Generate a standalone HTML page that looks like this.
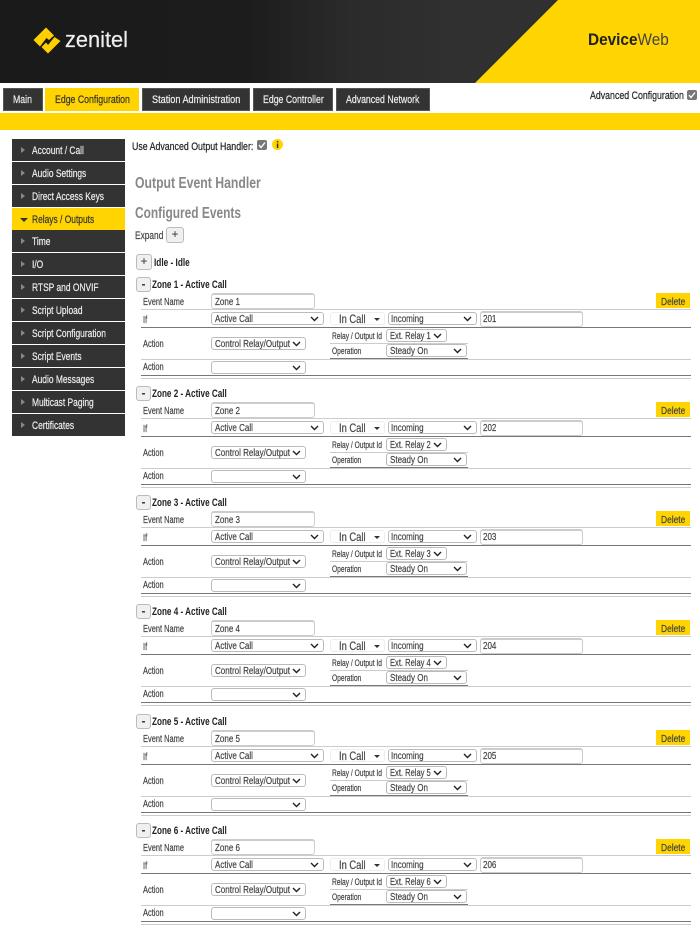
<!DOCTYPE html>
<html><head><meta charset="utf-8"><title>DeviceWeb</title>
<style>
html,body{margin:0;padding:0;background:#fff}
body{position:relative;width:700px;height:929px;overflow:hidden;font-family:"Liberation Sans",sans-serif;color:#333;filter:blur(.3px)}
.a{position:absolute}
.t{position:absolute;white-space:nowrap;transform:scaleX(.785);transform-origin:0 50%;font-size:11px;line-height:16px;height:16px;-webkit-text-stroke:.2px currentColor}
.tab{position:absolute;top:88px;height:23px;background:#333;border:1px solid #555;box-sizing:border-box}
.tab .t{color:#eee;top:3px;transform:scaleX(.795)}
.side{position:absolute;left:12px;width:113px;height:22px;background:#333}
.side .t{left:20px;top:4px;color:#eee;transform:scaleX(.765)}
.side i{position:absolute;left:9px;top:8px;width:0;height:0;border-left:4px solid #888;border-top:3px solid transparent;border-bottom:3px solid transparent}
.z{position:absolute;left:0;width:700px;height:105px}
.z>.t:nth-child(2){top:0!important;transform:scaleX(.74);-webkit-text-stroke:0}
.b{position:absolute;box-sizing:border-box;background:#f0f0f0;border:1px solid #bbb;border-radius:3px;width:15px;height:15px;text-align:center;font-size:12px;line-height:12px;color:#333}
.m{font-weight:bold}
.i{position:absolute;box-sizing:border-box;background:#fff;border:1px solid #ccc;border-top:2px solid #ccc;border-radius:3px}
.s{position:absolute;box-sizing:border-box;background:#fff;border:1px solid #bbb;border-radius:3px}
.s svg{position:absolute;right:4px;top:50%;margin-top:-3px}
.l{position:absolute;height:1px;background:#ccc}
.d{background:#777}
.lb{font-size:10px;color:#444;transform:scaleX(.745);margin-top:1px}
.dl{font-size:10.5px;color:#444;transform:scaleX(.8);margin-top:1px}
.sm{font-size:9px;color:#444;transform:scaleX(.74)}
.v{font-size:10.5px;color:#444;transform:scaleX(.765)}
.x{transform:scaleX(.72)}
.c{font-size:12px;color:#444;transform:scaleX(.78);left:339px;top:34px}
.k{position:absolute;left:374px;top:41px;border:3px solid transparent;border-top:3px solid #333;border-bottom:0}
.e{margin-top:1px}
.lb.e{margin-top:2px}
</style></head><body>

<div class="a" style="left:0;top:0;width:700px;height:83px;background:linear-gradient(90deg,#1a1a1a,#1c1c1c 35%,#2b2b2b 50%,#303030 65%)"></div>
<svg class="a" style="left:0;top:0" width="700" height="83"><polygon points="558,0 700,0 700,83 475,83" fill="#ffd400"/>
<path d="M33.5 40 46 27.5 54 35.5 49 40 46.5 38 40 46.5Z" fill="#ffd000"/>
<path d="M60.5 41 48 53.5 41.5 47 46 42.5 48 45 54.5 37Z" fill="#ffd000"/>
</svg>
<div class="t" style="left:65px;top:27px;font-size:22px;line-height:26px;height:26px;color:#eee;transform:scaleX(.99);-webkit-text-stroke:.2px #eee">zenitel</div>
<div class="t" style="left:588px;top:30px;font-size:16.5px;line-height:20px;height:20px;color:#222;transform:scaleX(.93);-webkit-text-stroke:0"><b>Device</b><span style="color:#444">Web</span></div>

<div class="tab" style="left:3px;width:40px"><span class="t" style="left:9px">Main</span></div>
<div class="tab" style="left:45px;width:94px;background:#ffd400;border-color:#ffd400"><span class="t" style="left:9px;color:#333">Edge Configuration</span></div>
<div class="tab" style="left:142px;width:108px"><span class="t" style="left:9px;transform:scaleX(.83)">Station Administration</span></div>
<div class="tab" style="left:253px;width:80px"><span class="t" style="left:9px">Edge Controller</span></div>
<div class="tab" style="left:336px;width:94px"><span class="t" style="left:9px">Advanced Network</span></div>
<div class="t" style="left:590px;top:88px;color:#222;transform:scaleX(.8)">Advanced Configuration</div>
<svg class="a" style="left:687px;top:90px" width="10" height="10"><rect width="10" height="10" rx="2" fill="#777"/><path d="M2 5 4 7.5 8 2.5" stroke="#fff" stroke-width="1.4" fill="none"/></svg>
<div class="a" style="left:0;top:113px;width:700px;height:17px;background:#ffd400"></div>

<div class="side" style="top:139px"><i></i><span class="t">Account / Call</span></div>
<div class="side" style="top:162px"><i></i><span class="t">Audio Settings</span></div>
<div class="side" style="top:185px"><i></i><span class="t">Direct Access Keys</span></div>
<div class="side" style="top:208px;background:#ffd400"><i style="left:8px;top:10px;border:4px solid transparent;border-top:4px solid #333;border-bottom:0"></i><span class="t" style="color:#333">Relays / Outputs</span></div>
<div class="side" style="top:230px"><i></i><span class="t">Time</span></div>
<div class="side" style="top:253px"><i></i><span class="t">I/O</span></div>
<div class="side" style="top:276px"><i></i><span class="t">RTSP and ONVIF</span></div>
<div class="side" style="top:299px"><i></i><span class="t">Script Upload</span></div>
<div class="side" style="top:322px"><i></i><span class="t">Script Configuration</span></div>
<div class="side" style="top:345px"><i></i><span class="t">Script Events</span></div>
<div class="side" style="top:368px"><i></i><span class="t">Audio Messages</span></div>
<div class="side" style="top:391px"><i></i><span class="t">Multicast Paging</span></div>
<div class="side" style="top:414px"><i></i><span class="t">Certificates</span></div>

<div class="t" style="left:132px;top:139px;color:#222;transform:scaleX(.8)">Use Advanced Output Handler:</div>
<svg class="a" style="left:257px;top:140px" width="10" height="10"><rect width="10" height="10" rx="2" fill="#777"/><path d="M2 5 4 7.5 8 2.5" stroke="#fff" stroke-width="1.4" fill="none"/></svg>
<svg class="a" style="left:272px;top:139px" width="11" height="11"><circle cx="5.5" cy="5.5" r="5.5" fill="#ffd400"/><rect x="4.8" y="2" width="1.5" height="1.5" fill="#333"/><rect x="4.8" y="4.5" width="1.5" height="4.5" fill="#333"/></svg>
<div class="t" style="left:135px;top:174px;font-size:16px;line-height:20px;height:20px;color:#888;font-weight:bold;transform:scaleX(.765);-webkit-text-stroke:0">Output Event Handler</div>
<div class="t" style="left:135px;top:204px;font-size:16px;line-height:20px;height:20px;color:#888;font-weight:bold;transform:scaleX(.745);-webkit-text-stroke:0">Configured Events</div>
<div class="t" style="left:135px;top:228px;color:#444;transform:scaleX(.76)">Expand</div>
<div class="b" style="left:166px;top:227px;width:18px;height:16px">+</div>
<div class="b" style="left:136px;top:254px;width:16px;height:16px">+</div>
<div class="t" style="left:154px;top:255px;font-weight:bold;color:#222;transform:scaleX(.75);-webkit-text-stroke:0">Idle - Idle</div>

<div class="z" style="top:277px">
<div class="b m" style="left:136px;top:0">-</div><div class="t" style="left:152px;top:0;font-weight:bold;color:#222">Zone 1 - Active Call</div>
<div class="t lb e" style="left:143px;top:16px">Event Name</div><div class="i" style="left:211px;top:16px;width:104px;height:16px"></div><div class="t v e" style="left:215px;top:16px">Zone 1</div>
<div class="a" style="left:656px;top:16px;width:34px;height:15px;background:#ffd400"></div><div class="t dl" style="left:661px;top:16px">Delete</div>
<div class="l" style="left:141px;top:32px;width:550px"></div>
<div class="t lb" style="left:143px;top:35px">If</div>
<div class="s" style="left:211px;top:35px;width:113px;height:13px"><svg width="9" height="6"><path d="M1 1 4.5 4.5 8 1" fill="none" stroke="#222" stroke-width="1.4"/></svg></div><div class="t v" style="left:215px;top:34px">Active Call</div>
<div class="s" style="left:330px;top:35px;width:55px;height:13px;border-color:#eee"></div><div class="t c">In Call</div><div class="k"></div>
<div class="s" style="left:388px;top:35px;width:89px;height:13px"><svg width="9" height="6"><path d="M1 1 4.5 4.5 8 1" fill="none" stroke="#222" stroke-width="1.4"/></svg></div><div class="t v" style="left:391px;top:34px">Incoming</div>
<div class="i" style="left:480px;top:34px;width:103px;height:16px"></div><div class="t v" style="left:483px;top:34px">201</div>
<div class="l d" style="left:141px;top:50px;width:550px"></div>
<div class="t lb" style="left:143px;top:59px">Action</div>
<div class="s" style="left:211px;top:60px;width:95px;height:13px"><svg width="9" height="6"><path d="M1 1 4.5 4.5 8 1" fill="none" stroke="#222" stroke-width="1.4"/></svg></div><div class="t v" style="left:215px;top:59px">Control Relay/Output</div>
<div class="t sm" style="left:332px;top:51px">Relay / Output Id</div>
<div class="s" style="left:386px;top:52px;width:61px;height:13px"><svg width="9" height="6"><path d="M1 1 4.5 4.5 8 1" fill="none" stroke="#222" stroke-width="1.4"/></svg></div><div class="t v x" style="left:390px;top:51px">Ext. Relay 1</div>
<div class="l" style="left:330px;top:66px;width:138px"></div>
<div class="t sm" style="left:332px;top:66px">Operation</div>
<div class="s" style="left:386px;top:67px;width:81px;height:13px"><svg width="9" height="6"><path d="M1 1 4.5 4.5 8 1" fill="none" stroke="#222" stroke-width="1.4"/></svg></div><div class="t v" style="left:390px;top:66px">Steady On</div>
<div class="l d" style="left:330px;top:81px;width:138px"></div>
<div class="l" style="left:141px;top:82px;width:550px"></div>
<div class="t lb" style="left:143px;top:82px">Action</div>
<div class="s" style="left:211px;top:84px;width:95px;height:13px"><svg width="9" height="6"><path d="M1 1 4.5 4.5 8 1" fill="none" stroke="#222" stroke-width="1.4"/></svg></div>
<div class="l d" style="left:141px;top:98px;width:550px"></div>
<div class="l" style="left:141px;top:101px;width:550px"></div>
</div>

<div class="z" style="top:386px">
<div class="b m" style="left:136px;top:0">-</div><div class="t" style="left:152px;top:0;font-weight:bold;color:#222">Zone 2 - Active Call</div>
<div class="t lb e" style="left:143px;top:16px">Event Name</div><div class="i" style="left:211px;top:16px;width:104px;height:16px"></div><div class="t v e" style="left:215px;top:16px">Zone 2</div>
<div class="a" style="left:656px;top:16px;width:34px;height:15px;background:#ffd400"></div><div class="t dl" style="left:661px;top:16px">Delete</div>
<div class="l" style="left:141px;top:32px;width:550px"></div>
<div class="t lb" style="left:143px;top:35px">If</div>
<div class="s" style="left:211px;top:35px;width:113px;height:13px"><svg width="9" height="6"><path d="M1 1 4.5 4.5 8 1" fill="none" stroke="#222" stroke-width="1.4"/></svg></div><div class="t v" style="left:215px;top:34px">Active Call</div>
<div class="s" style="left:330px;top:35px;width:55px;height:13px;border-color:#eee"></div><div class="t c">In Call</div><div class="k"></div>
<div class="s" style="left:388px;top:35px;width:89px;height:13px"><svg width="9" height="6"><path d="M1 1 4.5 4.5 8 1" fill="none" stroke="#222" stroke-width="1.4"/></svg></div><div class="t v" style="left:391px;top:34px">Incoming</div>
<div class="i" style="left:480px;top:34px;width:103px;height:16px"></div><div class="t v" style="left:483px;top:34px">202</div>
<div class="l d" style="left:141px;top:50px;width:550px"></div>
<div class="t lb" style="left:143px;top:59px">Action</div>
<div class="s" style="left:211px;top:60px;width:95px;height:13px"><svg width="9" height="6"><path d="M1 1 4.5 4.5 8 1" fill="none" stroke="#222" stroke-width="1.4"/></svg></div><div class="t v" style="left:215px;top:59px">Control Relay/Output</div>
<div class="t sm" style="left:332px;top:51px">Relay / Output Id</div>
<div class="s" style="left:386px;top:52px;width:61px;height:13px"><svg width="9" height="6"><path d="M1 1 4.5 4.5 8 1" fill="none" stroke="#222" stroke-width="1.4"/></svg></div><div class="t v x" style="left:390px;top:51px">Ext. Relay 2</div>
<div class="l" style="left:330px;top:66px;width:138px"></div>
<div class="t sm" style="left:332px;top:66px">Operation</div>
<div class="s" style="left:386px;top:67px;width:81px;height:13px"><svg width="9" height="6"><path d="M1 1 4.5 4.5 8 1" fill="none" stroke="#222" stroke-width="1.4"/></svg></div><div class="t v" style="left:390px;top:66px">Steady On</div>
<div class="l d" style="left:330px;top:81px;width:138px"></div>
<div class="l" style="left:141px;top:82px;width:550px"></div>
<div class="t lb" style="left:143px;top:82px">Action</div>
<div class="s" style="left:211px;top:84px;width:95px;height:13px"><svg width="9" height="6"><path d="M1 1 4.5 4.5 8 1" fill="none" stroke="#222" stroke-width="1.4"/></svg></div>
<div class="l d" style="left:141px;top:98px;width:550px"></div>
<div class="l" style="left:141px;top:101px;width:550px"></div>
</div>

<div class="z" style="top:495px">
<div class="b m" style="left:136px;top:0">-</div><div class="t" style="left:152px;top:0;font-weight:bold;color:#222">Zone 3 - Active Call</div>
<div class="t lb e" style="left:143px;top:16px">Event Name</div><div class="i" style="left:211px;top:16px;width:104px;height:16px"></div><div class="t v e" style="left:215px;top:16px">Zone 3</div>
<div class="a" style="left:656px;top:16px;width:34px;height:15px;background:#ffd400"></div><div class="t dl" style="left:661px;top:16px">Delete</div>
<div class="l" style="left:141px;top:32px;width:550px"></div>
<div class="t lb" style="left:143px;top:35px">If</div>
<div class="s" style="left:211px;top:35px;width:113px;height:13px"><svg width="9" height="6"><path d="M1 1 4.5 4.5 8 1" fill="none" stroke="#222" stroke-width="1.4"/></svg></div><div class="t v" style="left:215px;top:34px">Active Call</div>
<div class="s" style="left:330px;top:35px;width:55px;height:13px;border-color:#eee"></div><div class="t c">In Call</div><div class="k"></div>
<div class="s" style="left:388px;top:35px;width:89px;height:13px"><svg width="9" height="6"><path d="M1 1 4.5 4.5 8 1" fill="none" stroke="#222" stroke-width="1.4"/></svg></div><div class="t v" style="left:391px;top:34px">Incoming</div>
<div class="i" style="left:480px;top:34px;width:103px;height:16px"></div><div class="t v" style="left:483px;top:34px">203</div>
<div class="l d" style="left:141px;top:50px;width:550px"></div>
<div class="t lb" style="left:143px;top:59px">Action</div>
<div class="s" style="left:211px;top:60px;width:95px;height:13px"><svg width="9" height="6"><path d="M1 1 4.5 4.5 8 1" fill="none" stroke="#222" stroke-width="1.4"/></svg></div><div class="t v" style="left:215px;top:59px">Control Relay/Output</div>
<div class="t sm" style="left:332px;top:51px">Relay / Output Id</div>
<div class="s" style="left:386px;top:52px;width:61px;height:13px"><svg width="9" height="6"><path d="M1 1 4.5 4.5 8 1" fill="none" stroke="#222" stroke-width="1.4"/></svg></div><div class="t v x" style="left:390px;top:51px">Ext. Relay 3</div>
<div class="l" style="left:330px;top:66px;width:138px"></div>
<div class="t sm" style="left:332px;top:66px">Operation</div>
<div class="s" style="left:386px;top:67px;width:81px;height:13px"><svg width="9" height="6"><path d="M1 1 4.5 4.5 8 1" fill="none" stroke="#222" stroke-width="1.4"/></svg></div><div class="t v" style="left:390px;top:66px">Steady On</div>
<div class="l d" style="left:330px;top:81px;width:138px"></div>
<div class="l" style="left:141px;top:82px;width:550px"></div>
<div class="t lb" style="left:143px;top:82px">Action</div>
<div class="s" style="left:211px;top:84px;width:95px;height:13px"><svg width="9" height="6"><path d="M1 1 4.5 4.5 8 1" fill="none" stroke="#222" stroke-width="1.4"/></svg></div>
<div class="l d" style="left:141px;top:98px;width:550px"></div>
<div class="l" style="left:141px;top:101px;width:550px"></div>
</div>

<div class="z" style="top:604px">
<div class="b m" style="left:136px;top:0">-</div><div class="t" style="left:152px;top:0;font-weight:bold;color:#222">Zone 4 - Active Call</div>
<div class="t lb e" style="left:143px;top:16px">Event Name</div><div class="i" style="left:211px;top:16px;width:104px;height:16px"></div><div class="t v e" style="left:215px;top:16px">Zone 4</div>
<div class="a" style="left:656px;top:16px;width:34px;height:15px;background:#ffd400"></div><div class="t dl" style="left:661px;top:16px">Delete</div>
<div class="l" style="left:141px;top:32px;width:550px"></div>
<div class="t lb" style="left:143px;top:35px">If</div>
<div class="s" style="left:211px;top:35px;width:113px;height:13px"><svg width="9" height="6"><path d="M1 1 4.5 4.5 8 1" fill="none" stroke="#222" stroke-width="1.4"/></svg></div><div class="t v" style="left:215px;top:34px">Active Call</div>
<div class="s" style="left:330px;top:35px;width:55px;height:13px;border-color:#eee"></div><div class="t c">In Call</div><div class="k"></div>
<div class="s" style="left:388px;top:35px;width:89px;height:13px"><svg width="9" height="6"><path d="M1 1 4.5 4.5 8 1" fill="none" stroke="#222" stroke-width="1.4"/></svg></div><div class="t v" style="left:391px;top:34px">Incoming</div>
<div class="i" style="left:480px;top:34px;width:103px;height:16px"></div><div class="t v" style="left:483px;top:34px">204</div>
<div class="l d" style="left:141px;top:50px;width:550px"></div>
<div class="t lb" style="left:143px;top:59px">Action</div>
<div class="s" style="left:211px;top:60px;width:95px;height:13px"><svg width="9" height="6"><path d="M1 1 4.5 4.5 8 1" fill="none" stroke="#222" stroke-width="1.4"/></svg></div><div class="t v" style="left:215px;top:59px">Control Relay/Output</div>
<div class="t sm" style="left:332px;top:51px">Relay / Output Id</div>
<div class="s" style="left:386px;top:52px;width:61px;height:13px"><svg width="9" height="6"><path d="M1 1 4.5 4.5 8 1" fill="none" stroke="#222" stroke-width="1.4"/></svg></div><div class="t v x" style="left:390px;top:51px">Ext. Relay 4</div>
<div class="l" style="left:330px;top:66px;width:138px"></div>
<div class="t sm" style="left:332px;top:66px">Operation</div>
<div class="s" style="left:386px;top:67px;width:81px;height:13px"><svg width="9" height="6"><path d="M1 1 4.5 4.5 8 1" fill="none" stroke="#222" stroke-width="1.4"/></svg></div><div class="t v" style="left:390px;top:66px">Steady On</div>
<div class="l d" style="left:330px;top:81px;width:138px"></div>
<div class="l" style="left:141px;top:82px;width:550px"></div>
<div class="t lb" style="left:143px;top:82px">Action</div>
<div class="s" style="left:211px;top:84px;width:95px;height:13px"><svg width="9" height="6"><path d="M1 1 4.5 4.5 8 1" fill="none" stroke="#222" stroke-width="1.4"/></svg></div>
<div class="l d" style="left:141px;top:98px;width:550px"></div>
<div class="l" style="left:141px;top:101px;width:550px"></div>
</div>

<div class="z" style="top:714px">
<div class="b m" style="left:136px;top:0">-</div><div class="t" style="left:152px;top:0;font-weight:bold;color:#222">Zone 5 - Active Call</div>
<div class="t lb e" style="left:143px;top:16px">Event Name</div><div class="i" style="left:211px;top:16px;width:104px;height:16px"></div><div class="t v e" style="left:215px;top:16px">Zone 5</div>
<div class="a" style="left:656px;top:16px;width:34px;height:15px;background:#ffd400"></div><div class="t dl" style="left:661px;top:16px">Delete</div>
<div class="l" style="left:141px;top:32px;width:550px"></div>
<div class="t lb" style="left:143px;top:35px">If</div>
<div class="s" style="left:211px;top:35px;width:113px;height:13px"><svg width="9" height="6"><path d="M1 1 4.5 4.5 8 1" fill="none" stroke="#222" stroke-width="1.4"/></svg></div><div class="t v" style="left:215px;top:34px">Active Call</div>
<div class="s" style="left:330px;top:35px;width:55px;height:13px;border-color:#eee"></div><div class="t c">In Call</div><div class="k"></div>
<div class="s" style="left:388px;top:35px;width:89px;height:13px"><svg width="9" height="6"><path d="M1 1 4.5 4.5 8 1" fill="none" stroke="#222" stroke-width="1.4"/></svg></div><div class="t v" style="left:391px;top:34px">Incoming</div>
<div class="i" style="left:480px;top:34px;width:103px;height:16px"></div><div class="t v" style="left:483px;top:34px">205</div>
<div class="l d" style="left:141px;top:50px;width:550px"></div>
<div class="t lb" style="left:143px;top:59px">Action</div>
<div class="s" style="left:211px;top:60px;width:95px;height:13px"><svg width="9" height="6"><path d="M1 1 4.5 4.5 8 1" fill="none" stroke="#222" stroke-width="1.4"/></svg></div><div class="t v" style="left:215px;top:59px">Control Relay/Output</div>
<div class="t sm" style="left:332px;top:51px">Relay / Output Id</div>
<div class="s" style="left:386px;top:52px;width:61px;height:13px"><svg width="9" height="6"><path d="M1 1 4.5 4.5 8 1" fill="none" stroke="#222" stroke-width="1.4"/></svg></div><div class="t v x" style="left:390px;top:51px">Ext. Relay 5</div>
<div class="l" style="left:330px;top:66px;width:138px"></div>
<div class="t sm" style="left:332px;top:66px">Operation</div>
<div class="s" style="left:386px;top:67px;width:81px;height:13px"><svg width="9" height="6"><path d="M1 1 4.5 4.5 8 1" fill="none" stroke="#222" stroke-width="1.4"/></svg></div><div class="t v" style="left:390px;top:66px">Steady On</div>
<div class="l d" style="left:330px;top:81px;width:138px"></div>
<div class="l" style="left:141px;top:82px;width:550px"></div>
<div class="t lb" style="left:143px;top:82px">Action</div>
<div class="s" style="left:211px;top:84px;width:95px;height:13px"><svg width="9" height="6"><path d="M1 1 4.5 4.5 8 1" fill="none" stroke="#222" stroke-width="1.4"/></svg></div>
<div class="l d" style="left:141px;top:98px;width:550px"></div>
<div class="l" style="left:141px;top:101px;width:550px"></div>
</div>

<div class="z" style="top:823px">
<div class="b m" style="left:136px;top:0">-</div><div class="t" style="left:152px;top:0;font-weight:bold;color:#222">Zone 6 - Active Call</div>
<div class="t lb e" style="left:143px;top:16px">Event Name</div><div class="i" style="left:211px;top:16px;width:104px;height:16px"></div><div class="t v e" style="left:215px;top:16px">Zone 6</div>
<div class="a" style="left:656px;top:16px;width:34px;height:15px;background:#ffd400"></div><div class="t dl" style="left:661px;top:16px">Delete</div>
<div class="l" style="left:141px;top:32px;width:550px"></div>
<div class="t lb" style="left:143px;top:35px">If</div>
<div class="s" style="left:211px;top:35px;width:113px;height:13px"><svg width="9" height="6"><path d="M1 1 4.5 4.5 8 1" fill="none" stroke="#222" stroke-width="1.4"/></svg></div><div class="t v" style="left:215px;top:34px">Active Call</div>
<div class="s" style="left:330px;top:35px;width:55px;height:13px;border-color:#eee"></div><div class="t c">In Call</div><div class="k"></div>
<div class="s" style="left:388px;top:35px;width:89px;height:13px"><svg width="9" height="6"><path d="M1 1 4.5 4.5 8 1" fill="none" stroke="#222" stroke-width="1.4"/></svg></div><div class="t v" style="left:391px;top:34px">Incoming</div>
<div class="i" style="left:480px;top:34px;width:103px;height:16px"></div><div class="t v" style="left:483px;top:34px">206</div>
<div class="l d" style="left:141px;top:50px;width:550px"></div>
<div class="t lb" style="left:143px;top:59px">Action</div>
<div class="s" style="left:211px;top:60px;width:95px;height:13px"><svg width="9" height="6"><path d="M1 1 4.5 4.5 8 1" fill="none" stroke="#222" stroke-width="1.4"/></svg></div><div class="t v" style="left:215px;top:59px">Control Relay/Output</div>
<div class="t sm" style="left:332px;top:51px">Relay / Output Id</div>
<div class="s" style="left:386px;top:52px;width:61px;height:13px"><svg width="9" height="6"><path d="M1 1 4.5 4.5 8 1" fill="none" stroke="#222" stroke-width="1.4"/></svg></div><div class="t v x" style="left:390px;top:51px">Ext. Relay 6</div>
<div class="l" style="left:330px;top:66px;width:138px"></div>
<div class="t sm" style="left:332px;top:66px">Operation</div>
<div class="s" style="left:386px;top:67px;width:81px;height:13px"><svg width="9" height="6"><path d="M1 1 4.5 4.5 8 1" fill="none" stroke="#222" stroke-width="1.4"/></svg></div><div class="t v" style="left:390px;top:66px">Steady On</div>
<div class="l d" style="left:330px;top:81px;width:138px"></div>
<div class="l" style="left:141px;top:82px;width:550px"></div>
<div class="t lb" style="left:143px;top:82px">Action</div>
<div class="s" style="left:211px;top:84px;width:95px;height:13px"><svg width="9" height="6"><path d="M1 1 4.5 4.5 8 1" fill="none" stroke="#222" stroke-width="1.4"/></svg></div>
<div class="l d" style="left:141px;top:98px;width:550px"></div>
<div class="l" style="left:141px;top:101px;width:550px"></div>
</div>

</body></html>
